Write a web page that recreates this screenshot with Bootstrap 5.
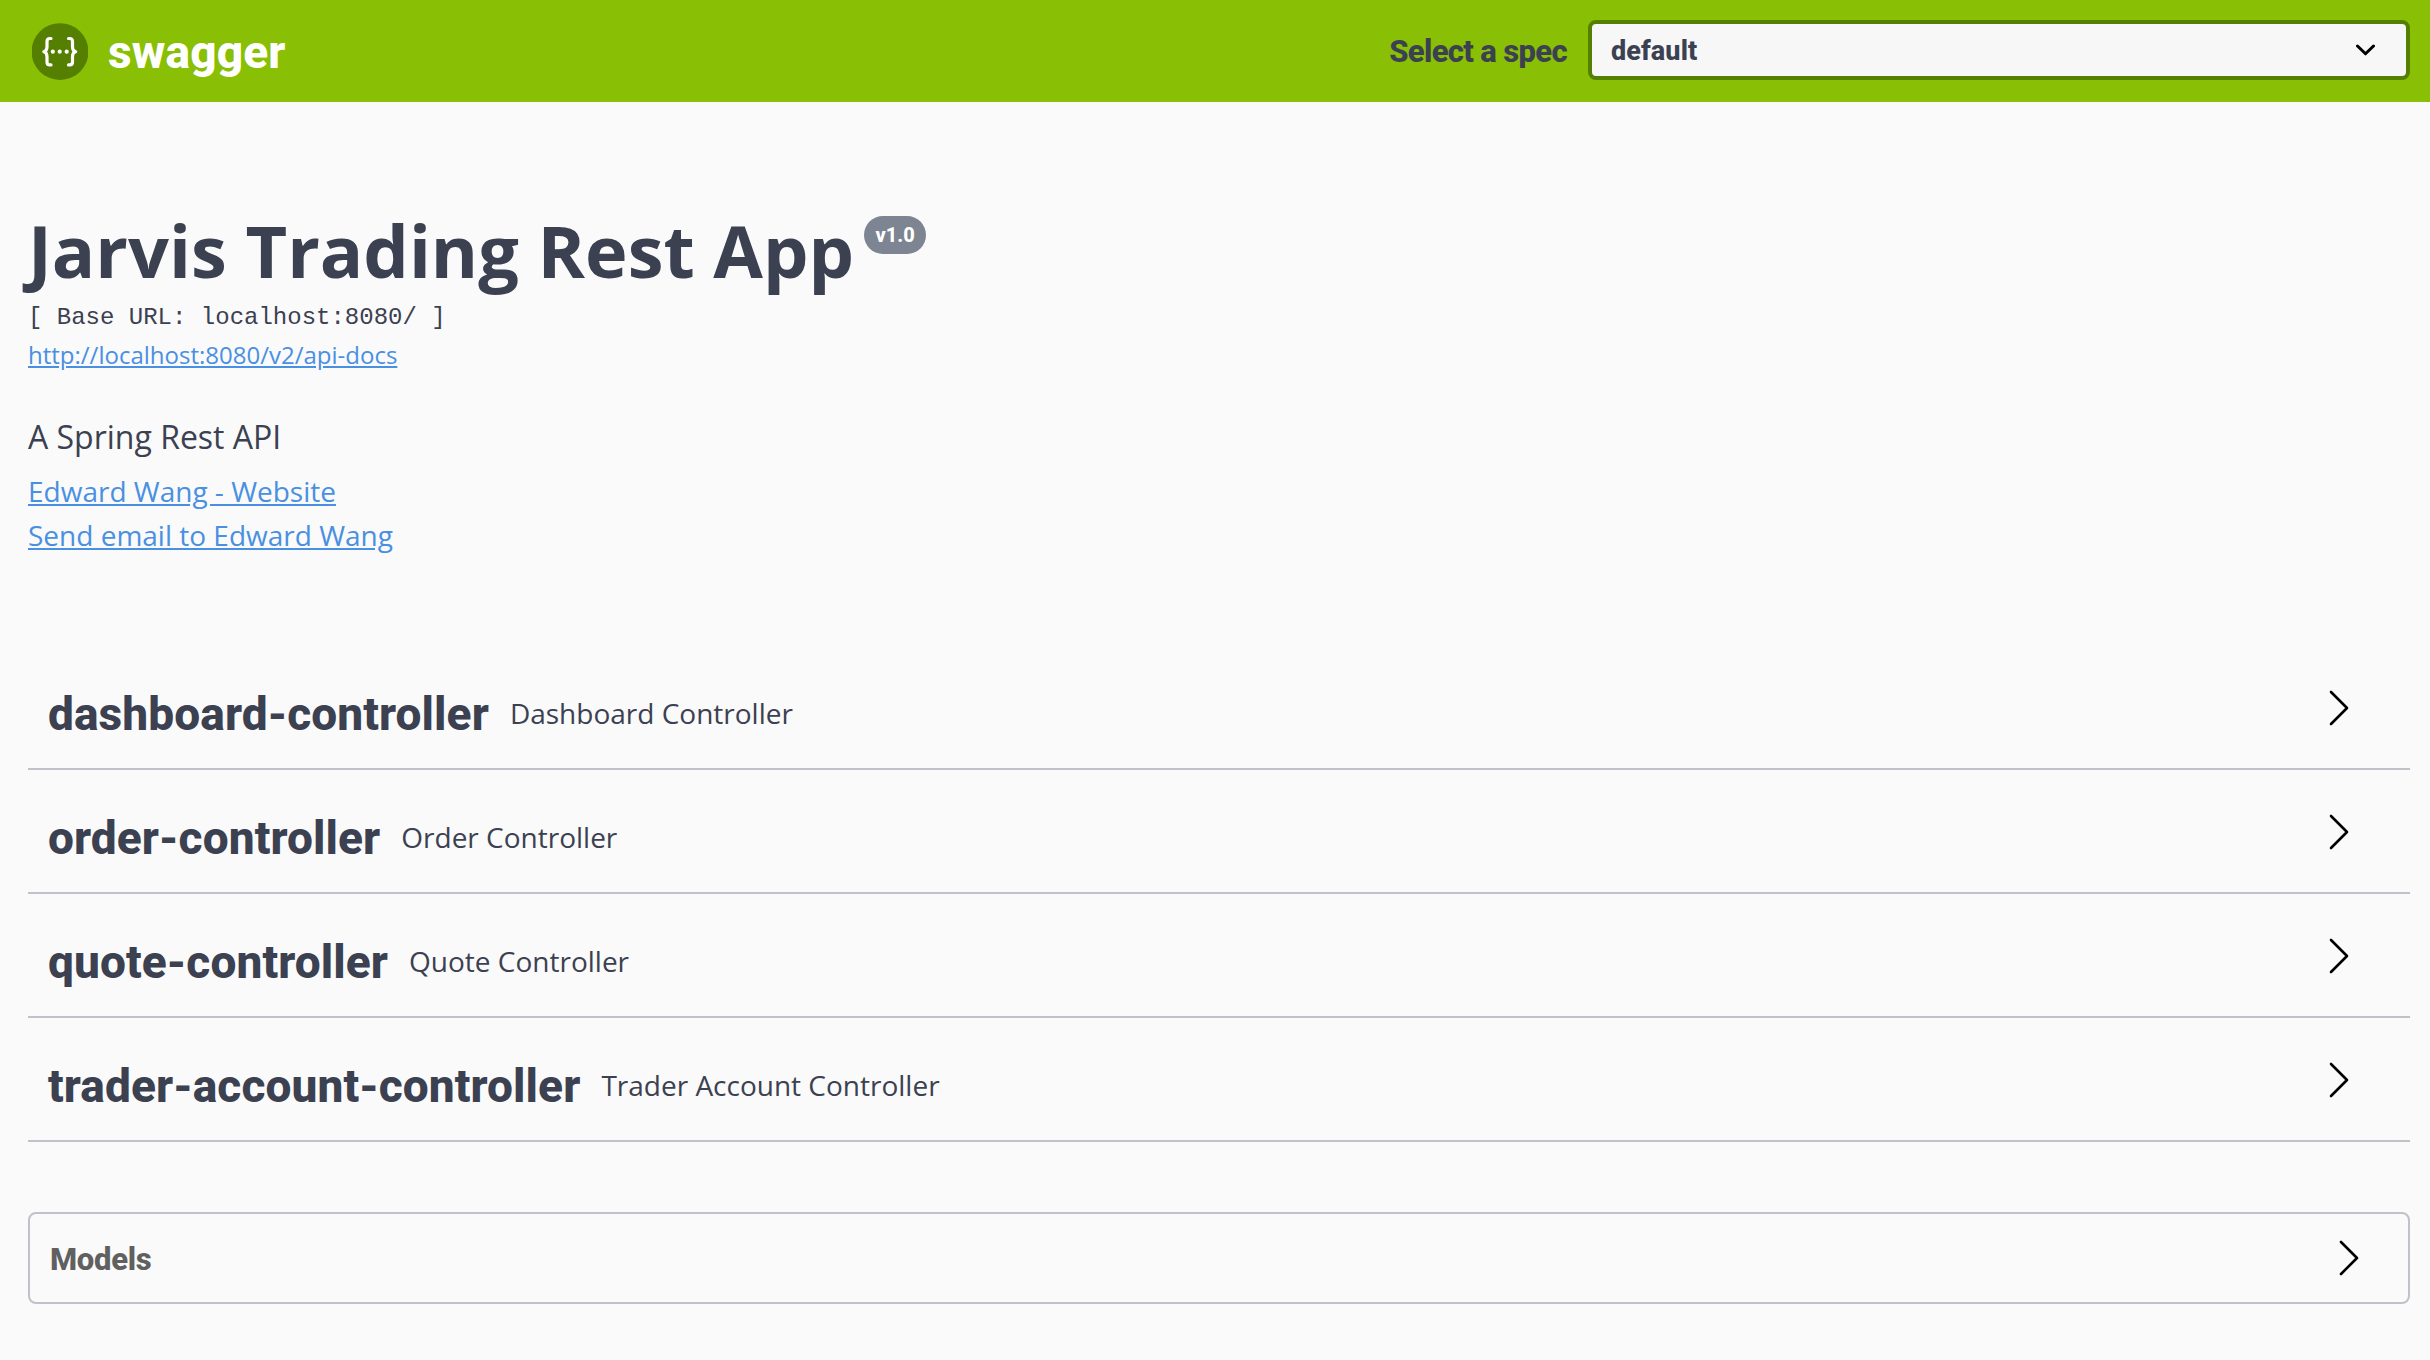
<!DOCTYPE html>
<html lang="en">
<head>
<meta charset="utf-8">
<meta name="viewport" content="width=device-width, initial-scale=1">
<title>Swagger UI</title>
<link href="https://cdn.jsdelivr.net/npm/bootstrap@5.3.0/dist/css/bootstrap.min.css" rel="stylesheet">
<style>
  body { background: #fafafa; color: #3b4151; font-family: "Open Sans", sans-serif; overflow: hidden; }
  a { color: #4990e2; text-decoration: underline; }
  .heading-face { font-family: Roboto, sans-serif; font-weight: 800; white-space: nowrap; }
  .topbar { height: 102px; background: #89bf04; padding: 0 20px 0 32px; }
  .brand-logo { margin-top: 3px; }
  .brand-name { font-size: 46px; line-height: 60px; letter-spacing: .15px; margin: 2px 0 0 20px; color: #fff; }
  .spec-label { font-size: 31px; line-height: 44px; letter-spacing: -.65px; margin: 1px 21px 0 0; }
  .spec-select { width: 822px; height: 60px; margin-bottom: 2px; border: 4px solid #547f00; border-radius: 8px; background: #f7f7f7; padding: 0 31px 0 19px; font-size: 27px; line-height: 44px; letter-spacing: .1px; }
  .spec-select span { margin-top: 2px; }
  .page { padding: 0 20px 0 28px; }
  .api-info { padding-top: 108px; height: 544px; }
  .api-title { font-size: 72px; line-height: 80px; font-weight: 700; margin: 0; white-space: nowrap; }
  .version { margin: 6px 0 0 10px; width: 62px; height: 38px; border-radius: 19px; background: #7d8492; color: #fff; font-size: 20px; line-height: 39px; }
  .base-url { font: 24px/34px "Liberation Mono", monospace; margin: 11px 0 3px; white-space: pre; }
  .docs-link { font-size: 24px; line-height: 34px; margin-bottom: 43px; }
  .about { font-size: 32px; line-height: 44px; margin-bottom: 10px; }
  .contact { font-size: 28px; line-height: 44px; }
  .tag-row { height: 124px; border-bottom: 2px solid #c1c2c9; padding: 0 61px 0 20px; }
  .tag-name { font-size: 46px; line-height: 60px; letter-spacing: .1px; margin: 38px 21px 0 0; }
  .tag-desc { font-size: 28px; line-height: 40px; margin-top: 47px; }
  .tag-row svg { margin-top: 44px; }
  .models { height: 92px; margin-top: 70px; border: 2px solid #c1c2c9; border-radius: 8px; padding: 0 49px 0 20px; }
  .models-title { font-size: 31px; line-height: 44px; letter-spacing: -.3px; color: #606060; margin: 3px 0 0; }
  .chev { fill: none; stroke: #000; stroke-width: 2.6; stroke-linecap: round; stroke-linejoin: round; }
  .caret { stroke-width: 3; }
</style>
</head>
<body>
<header class="topbar d-flex align-items-center justify-content-between">
  <div class="d-flex align-items-start">
    <svg class="brand-logo" width="56" height="57" viewBox="0 0 56 57" aria-hidden="true">
      <circle cx="28" cy="28.6" r="28.4" fill="#547f00"/>
      <g fill="none" stroke="#fff" stroke-width="3.2" stroke-linecap="round" stroke-linejoin="round">
        <path d="M19 15.5h-1.2q-2.8 0-2.8 3v5.2q0 4.4-3.2 5 3.2.6 3.2 5v5.2q0 3 2.8 3H19"/>
        <path d="M36.5 15.5h1.2q2.8 0 2.8 3v5.2q0 4.4 3.2 5-3.2.6-3.2 5v5.2q0 3-2.8 3h-1.2"/>
      </g>
      <g fill="#fff"><circle cx="20.8" cy="28.7" r="2.1"/><circle cx="27.7" cy="28.7" r="2.1"/><circle cx="34.7" cy="28.7" r="2.1"/></g>
    </svg>
    <span class="heading-face brand-name">swagger</span>
  </div>
  <div class="d-flex align-items-center">
    <span class="heading-face spec-label">Select a spec</span>
    <div class="spec-select heading-face d-flex align-items-center justify-content-between" role="combobox">
      <span>default</span>
      <svg width="19" height="12" viewBox="0 0 19 12" class="chev caret"><path d="M1.5 2l8 7.8 8-7.8"/></svg>
    </div>
  </div>
</header>
<main class="page">
  <section class="api-info">
    <div class="d-flex align-items-start">
      <h1 class="api-title">Jarvis Trading Rest App</h1>
      <span class="heading-face version text-center">v1.0</span>
    </div>
    <div class="base-url">[ Base URL: localhost:8080/ ]</div>
    <div class="docs-link"><a href="#">http://localhost:8080/v2/api-docs</a></div>
    <div class="about">A Spring Rest API</div>
    <div class="contact"><a href="#">Edward Wang - Website</a></div>
    <div class="contact"><a href="#">Send email to Edward Wang</a></div>
  </section>
  <section>
    <div class="tag-row d-flex align-items-start">
      <span class="heading-face tag-name">dashboard-controller</span><span class="tag-desc">Dashboard Controller</span>
      <svg class="chev ms-auto" width="20" height="36" viewBox="0 0 20 36"><path d="M2 2l16 16L2 34"/></svg>
    </div>
    <div class="tag-row d-flex align-items-start">
      <span class="heading-face tag-name">order-controller</span><span class="tag-desc">Order Controller</span>
      <svg class="chev ms-auto" width="20" height="36" viewBox="0 0 20 36"><path d="M2 2l16 16L2 34"/></svg>
    </div>
    <div class="tag-row d-flex align-items-start">
      <span class="heading-face tag-name">quote-controller</span><span class="tag-desc">Quote Controller</span>
      <svg class="chev ms-auto" width="20" height="36" viewBox="0 0 20 36"><path d="M2 2l16 16L2 34"/></svg>
    </div>
    <div class="tag-row d-flex align-items-start">
      <span class="heading-face tag-name">trader-account-controller</span><span class="tag-desc">Trader Account Controller</span>
      <svg class="chev ms-auto" width="20" height="36" viewBox="0 0 20 36"><path d="M2 2l16 16L2 34"/></svg>
    </div>
  </section>
  <section class="models d-flex align-items-center justify-content-between">
    <h4 class="heading-face models-title">Models</h4>
    <svg class="chev" width="20" height="36" viewBox="0 0 20 36"><path d="M2 2l16 16L2 34"/></svg>
  </section>
</main>
<script src="https://cdn.jsdelivr.net/npm/bootstrap@5.3.0/dist/js/bootstrap.bundle.min.js"></script>
</body>
</html>
